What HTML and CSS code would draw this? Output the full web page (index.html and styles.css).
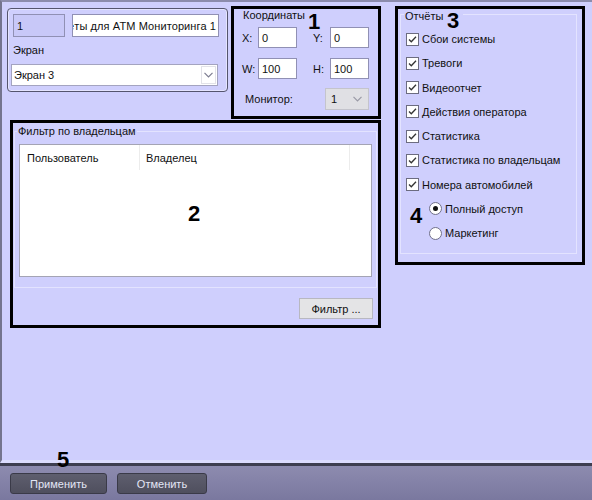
FILE: index.html
```html
<!DOCTYPE html>
<html>
<head>
<meta charset="utf-8">
<link rel="stylesheet" href="styles.css">
</head>
<body>
<div class="app">
  <div class="main">
    <div class="left">
      <div class="toprow">
        <div class="panel1">
          <div class="idrow">
            <div class="field idfield">1</div>
            <div class="field namefield"><span>Отчёты для АТМ Мониторинга 1</span></div>
          </div>
          <div class="lbl screenlbl">Экран</div>
          <div class="combo screencombo">
            <span>Экран 3</span>
            <span class="arrowbox"><svg width="9" height="6" viewBox="0 0 9 6"><path d="M0.5 0.8 L4.5 4.8 L8.5 0.8" fill="none" stroke="#7c7c90" stroke-width="1.2"/></svg></span>
          </div>
        </div>
        <div class="mark coords">
          <div class="cap">Координаты</div>
          <div class="crow r1">
            <span class="la">X:</span><div class="field nf">0</div>
            <span class="lb">Y:</span><div class="field nf">0</div>
          </div>
          <div class="crow r2">
            <span class="la">W:</span><div class="field nf">100</div>
            <span class="lb">H:</span><div class="field nf">100</div>
          </div>
          <div class="monrow">
            <span class="monlbl">Монитор:</span>
            <div class="combo moncombo">
              <span class="monval">1</span>
              <svg width="9" height="6" viewBox="0 0 9 6"><path d="M0.5 0.8 L4.5 4.8 L8.5 0.8" fill="none" stroke="#9a9aa6" stroke-width="1.2"/></svg>
            </div>
          </div>
        </div>
      </div>
      <div class="mark filter">
        <div class="group fgroup">
          <div class="cap fcap">Фильтр по владельцам</div>
          <div class="list">
            <div class="lhead">
              <div class="col c1">Пользователь</div>
              <div class="col c2">Владелец</div>
              <div class="col c3"></div>
            </div>
          </div>
        </div>
        <div class="btnrow"><button class="btn">Фильтр ...</button></div>
      </div>
    </div>
    <div class="mark reports">
      <div class="group rgroup">
        <div class="cap rcap">Отчёты</div>
        <ul class="checks">
          <li class="chk"><span class="box"><svg width="11" height="11" viewBox="0 0 11 11"><path d="M2 5.5 L4.3 7.8 L9 2.8" fill="none" stroke="#333" stroke-width="1.3"/></svg></span>Сбои системы</li>
          <li class="chk"><span class="box"><svg width="11" height="11" viewBox="0 0 11 11"><path d="M2 5.5 L4.3 7.8 L9 2.8" fill="none" stroke="#333" stroke-width="1.3"/></svg></span>Тревоги</li>
          <li class="chk"><span class="box"><svg width="11" height="11" viewBox="0 0 11 11"><path d="M2 5.5 L4.3 7.8 L9 2.8" fill="none" stroke="#333" stroke-width="1.3"/></svg></span>Видеоотчет</li>
          <li class="chk"><span class="box"><svg width="11" height="11" viewBox="0 0 11 11"><path d="M2 5.5 L4.3 7.8 L9 2.8" fill="none" stroke="#333" stroke-width="1.3"/></svg></span>Действия оператора</li>
          <li class="chk"><span class="box"><svg width="11" height="11" viewBox="0 0 11 11"><path d="M2 5.5 L4.3 7.8 L9 2.8" fill="none" stroke="#333" stroke-width="1.3"/></svg></span>Статистика</li>
          <li class="chk"><span class="box"><svg width="11" height="11" viewBox="0 0 11 11"><path d="M2 5.5 L4.3 7.8 L9 2.8" fill="none" stroke="#333" stroke-width="1.3"/></svg></span>Статистика по владельцам</li>
          <li class="chk"><span class="box"><svg width="11" height="11" viewBox="0 0 11 11"><path d="M2 5.5 L4.3 7.8 L9 2.8" fill="none" stroke="#333" stroke-width="1.3"/></svg></span>Номера автомобилей</li>
          <li class="chk rad"><span class="radio on"></span>Полный доступ</li>
          <li class="chk rad"><span class="radio"></span>Маркетинг</li>
        </ul>
      </div>
    </div>
  </div>
  <div class="footer">
    <button class="fbtn apply">Применить</button>
    <button class="fbtn cancel">Отменить</button>
  </div>
  <span class="anno a1">1</span>
  <span class="anno a2">2</span>
  <span class="anno a3">3</span>
  <span class="anno a4">4</span>
  <span class="anno a5">5</span>
</div>
</body>
</html>
```

FILE: styles.css
```css
* { box-sizing: border-box; }
html, body { margin: 0; padding: 0; }
body {
  width: 592px;
  height: 500px;
  overflow: hidden;
  font-family: "Liberation Sans", Arial, sans-serif;
  font-size: 11px;
  color: #111;
  background: #cfcffd;
}
.app {
  position: relative;
  width: 592px;
  height: 500px;
  display: flex;
  flex-direction: column;
}
.main {
  height: 463px;
  flex: none;
  display: flex;
  align-items: flex-start;
  border-top: 2px solid #8c8cac;
  border-left: 2px solid #74748e;
  border-bottom: 3px solid #dcdcfe;
  background: #cfcffd;
}
.left { width: 379px; flex: none; }
.toprow { display: flex; align-items: flex-start; }

.panel1 {
  margin: 6px 0 0 5px;
  width: 221px;
  height: 84px;
  border: 1px solid #55556e;
  border-radius: 4px;
  box-shadow: inset 0 0 0 1px #e4e4ff;
  padding: 5px 0 0 5px;
}
.idrow { display: flex; gap: 7px; }
.field {
  height: 23px;
  border: 1px solid #9090b4;
  background: #fff;
  padding: 0 3px;
  display: flex;
  align-items: center;
  white-space: nowrap;
}
.idfield { width: 52px; background: #c8c8f8; }
.namefield {
  width: 147px;
  justify-content: flex-end;
  overflow: hidden;
  padding-right: 2px;
}
.namefield span { flex: none; letter-spacing: 0.1px; }
.lbl { line-height: 13px; }
.screenlbl { margin-top: 7px; }
.combo {
  display: flex;
  align-items: center;
  justify-content: space-between;
  border: 1px solid #a4a4c0;
  background: #fff;
}
.screencombo {
  margin: 7px 0 0 -2px;
  width: 207px;
  height: 22px;
  padding-left: 2px;
}
.arrowbox {
  width: 15px;
  height: 18px;
  margin-right: 1px;
  border: 1px solid #e2e2e8;
  display: flex;
  align-items: center;
  justify-content: center;
}

.mark { border: 3px solid #000; flex: none; }
.coords {
  margin: 4px 0 0 3px;
  width: 150px;
  height: 113px;
  padding-left: 8px;
}
.cap { line-height: 13px; width: fit-content; padding: 0 1px; background: #cfcffd; }
.crow { display: flex; align-items: center; height: 21px; }
.r1 { margin-top: 5px; }
.r2 { margin-top: 10px; }
.la { width: 16px; }
.lb { width: 17px; margin-left: 16px; }
.nf { width: 39px; height: 21px; padding-left: 3px; }
.monrow { display: flex; align-items: center; margin-top: 9px; height: 22px; }
.monlbl { width: 83px; padding-left: 3px; }
.moncombo {
  width: 44px;
  height: 22px;
  background: #e0e0e4;
  border-color: #c4c4cc;
  padding: 0 6px 0 5px;
}
.monval { color: #111; }

.filter {
  margin: 1px 0 0 8px;
  width: 371px;
  height: 208px;
}
.group { border: 1px solid #e3e3ff; }
.fgroup {
  margin: 8px 1px 0 1px;
  padding: 0 3px 10px 3px;
}
.fcap { margin: -7px 0 0 -1px; }
.list {
  width: 353px;
  height: 133px;
  margin: 6px 0 0 1px;
  background: #fff;
  border: 1px solid #a4a4b4;
}
.lhead { display: flex; height: 25px; }
.col { display: flex; align-items: center; }
.c1 { width: 120px; padding-left: 7px; border-right: 1px solid #ececec; }
.c2 { width: 210px; padding-left: 6px; border-right: 1px solid #ececec; }
.c3 { flex: 1; }
.btnrow { display: flex; justify-content: flex-end; margin: 10px 5px 0 0; }
.btn {
  width: 74px;
  height: 21px;
  padding: 0;
  background: #e4e4e6;
  border: 1px solid #b8b8c0;
  font: inherit;
  color: #111;
}

.reports {
  margin: 4px 0 0 14px;
  width: 190px;
  height: 259px;
  padding: 5px 5px 8px 2px;
}
.rgroup { height: 100%; padding-left: 5px; }
.rcap { margin: -5px 0 0 -2px; padding-right: 20px; }
.checks { list-style: none; margin: 4px 0 0 0; padding: 0; }
.chk { display: flex; align-items: center; height: 24.25px; gap: 3px; white-space: nowrap; }
.box {
  width: 13px;
  height: 13px;
  flex: none;
  border: 1px solid #6c6c80;
  background: #fff;
  display: flex;
  align-items: center;
  justify-content: center;
}
.rad { padding-left: 23px; }
.radio {
  width: 13px;
  height: 13px;
  flex: none;
  border-radius: 50%;
  border: 1px solid #70708a;
  background: #fff;
  display: flex;
  align-items: center;
  justify-content: center;
}
.radio.on::after {
  content: "";
  width: 5px;
  height: 5px;
  border-radius: 50%;
  background: #111;
}

.footer {
  flex: 1;
  border-top: 3px solid #3e3e50;
  background: linear-gradient(#8d8baf, #7a789f);
  display: flex;
  align-items: flex-start;
  gap: 10px;
  padding: 7px 0 0 10px;
}
.fbtn {
  height: 21px;
  padding: 0;
  border: 1px solid #3a3a48;
  border-radius: 3px;
  background: linear-gradient(#5e5e6e, #4f4f5e);
  color: #e4e6f6;
  font: inherit;
}
.apply { width: 97px; }
.cancel { width: 90px; }

.anno {
  position: absolute;
  font: bold 22px/22px "Liberation Sans", Arial, sans-serif;
  color: #000;
}
.a1 { left: 308px; top: 11px; }
.a2 { left: 188px; top: 203px; }
.a3 { left: 447px; top: 10px; }
.a4 { left: 410px; top: 205px; }
.a5 { left: 57px; top: 449px; }
```
